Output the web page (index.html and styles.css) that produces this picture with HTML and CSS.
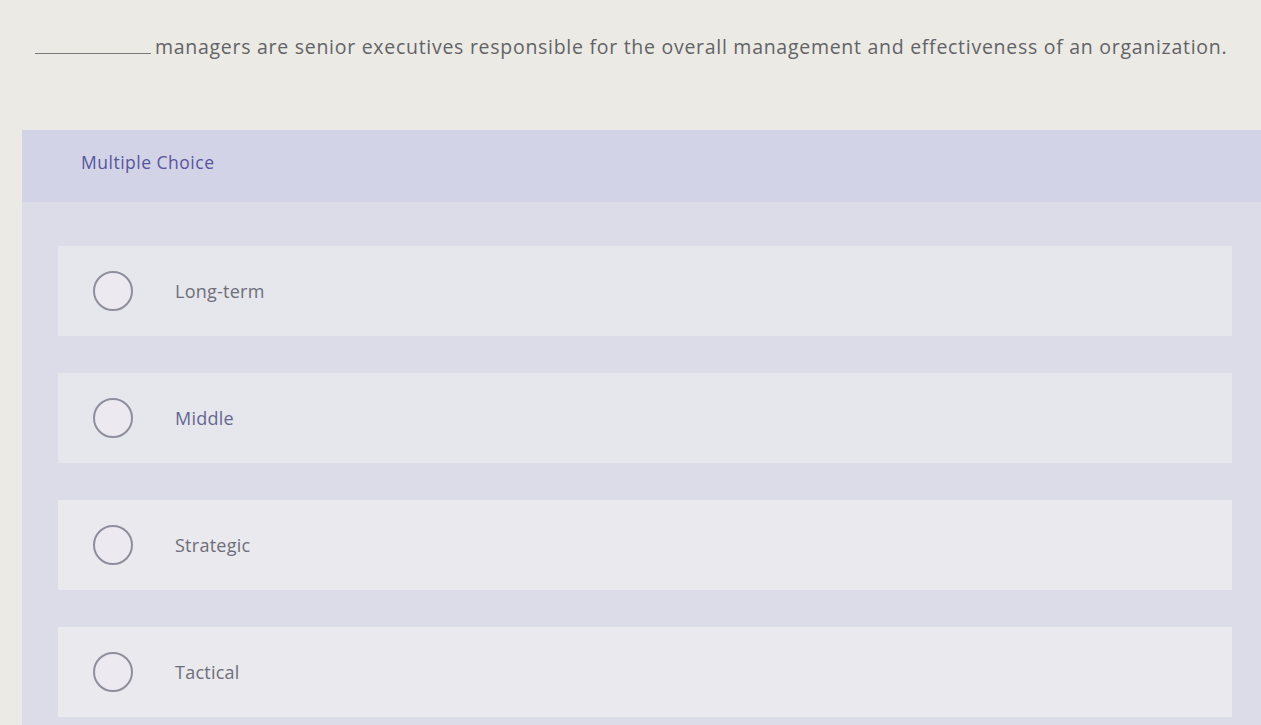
FILE: index.html
```html
<!DOCTYPE html>
<html lang="en">
<head>
<meta charset="utf-8">
<title>Multiple Choice</title>
<link rel="stylesheet" href="styles.css">
</head>
<body>
<div class="page">
  <p class="question"><span class="blank"></span>managers are senior executives responsible for the overall management and effectiveness of an organization.</p>
  <section class="panel">
    <header class="panel-head">Multiple Choice</header>
    <div class="options">
      <label class="option"><span class="radio"></span><span class="label">Long-term</span></label>
      <label class="option"><span class="radio"></span><span class="label label-blue">Middle</span></label>
      <label class="option"><span class="radio"></span><span class="label">Strategic</span></label>
      <label class="option"><span class="radio"></span><span class="label">Tactical</span></label>
    </div>
  </section>
</div>
</body>
</html>
```

FILE: styles.css
```css
html, body {
  margin: 0;
  padding: 0;
  width: 1261px;
  height: 725px;
  overflow: hidden;
  background: #ebeae5;
  font-family: "Open Sans", "Liberation Sans", sans-serif;
}
.page {
  display: flex;
  flex-direction: column;
  padding-top: 33px;
}
.question {
  margin: 0;
  padding-left: 35px;
  font-size: 19.5px;
  line-height: 28px;
  color: #636365;
  display: flex;
  align-items: baseline;
  white-space: nowrap;
  letter-spacing: 0.72px;
}
.blank {
  display: inline-block;
  width: 116px;
  height: 1px;
  border-bottom: 1.5px solid #7a7a7c;
  margin-right: 4px;
}
.panel {
  margin-top: 69px;
  margin-left: 22px;
  background: #dcdce9;
  padding-bottom: 10px;
}
.panel-head {
  height: 72px;
  background: #d3d3e8;
  padding-left: 59px;
  box-sizing: border-box;
  padding-top: 20px;
  font-size: 17.5px;
  color: #56569a;
  letter-spacing: 0.5px;
}
.options {
  display: flex;
  flex-direction: column;
  gap: 37px;
  padding: 44px 29px 0 36px;
}
.option {
  height: 90px;
  background: #e6e6ed;
  display: flex;
  align-items: center;
  padding-left: 35px;
}
.option:nth-child(3), .option:nth-child(4) {
  background: #e9e9ee;
}
.radio {
  width: 36px;
  height: 36px;
  border: 2px solid #8e8e9c;
  border-radius: 50%;
  background: #eceaf0;
  flex: none;
}
.label {
  margin-left: 42px;
  font-size: 18px;
  color: #6e6e78;
  letter-spacing: 0.25px;
  margin-top: -1px;
}
.label-blue {
  color: #656690;
}
```
